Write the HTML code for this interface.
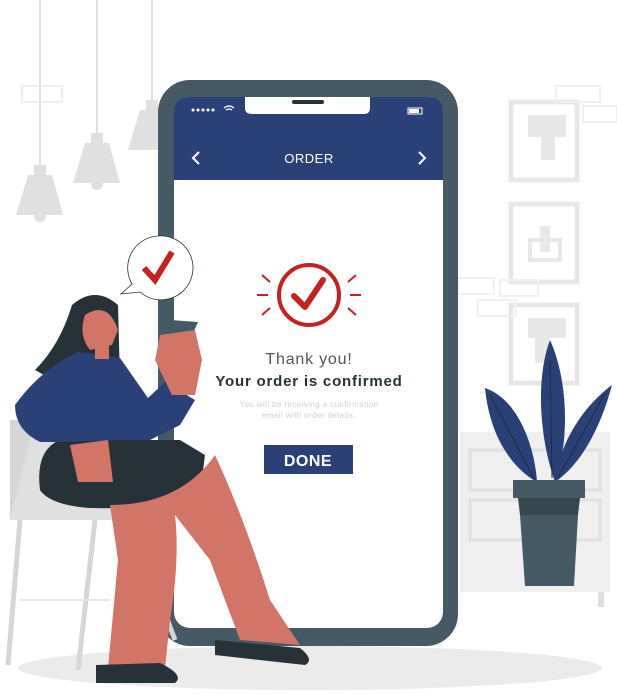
<!DOCTYPE html>
<html><head><meta charset="utf-8"><style>
html,body{margin:0;padding:0;background:#fff;}
svg{display:block}
text{font-family:"Liberation Sans",sans-serif}
</style></head><body>
<svg width="617" height="694" viewBox="0 0 617 694" xmlns="http://www.w3.org/2000/svg">
<ellipse cx="310" cy="668" rx="292" ry="22" fill="#ebebeb"/>
<g stroke="#e0e0e0" stroke-width="2">
<line x1="40" y1="0" x2="40" y2="170"/><line x1="97" y1="0" x2="97" y2="138"/><line x1="152" y1="0" x2="152" y2="105"/>
</g>
<g fill="#e0e0e0">
<rect x="34" y="165" width="12" height="10"/><path d="M28 175 L52 175 L63 215 L16 215 Z"/><circle cx="40" cy="216" r="6"/>
<rect x="91" y="133" width="12" height="10"/><path d="M85 143 L109 143 L120 183 L73 183 Z"/><circle cx="97" cy="184" r="6"/>
<rect x="146" y="100" width="12" height="10"/><path d="M140 110 L158 110 L158 150 L128 150 Z"/>
</g>
<rect x="22" y="86" width="40" height="16" fill="none" stroke="#eee" stroke-width="2"/>
<g fill="none" stroke="#e8e8e8" stroke-width="5">
<rect x="511" y="102" width="66" height="78"/><rect x="511" y="204" width="66" height="78"/><rect x="511" y="305" width="66" height="78"/>
</g>
<g fill="#e8e8e8">
<rect x="528" y="115" width="38" height="22"/><rect x="541" y="120" width="14" height="40"/>
<rect x="530" y="240" width="30" height="20" fill="none" stroke="#e8e8e8" stroke-width="4"/><rect x="540" y="226" width="10" height="26"/>
<rect x="528" y="318" width="38" height="20"/><rect x="535" y="325" width="14" height="38"/>
</g>
<g fill="none" stroke="#f0f0f0" stroke-width="2">
<rect x="556" y="86" width="44" height="16"/><rect x="583" y="106" width="34" height="16"/>
<rect x="458" y="278" width="36" height="16"/><rect x="500" y="280" width="38" height="16"/><rect x="478" y="300" width="38" height="16"/>
</g>
<rect x="460" y="432" width="150" height="160" fill="#efefef"/>
<g fill="none" stroke="#e0e0e0" stroke-width="3"><rect x="470" y="450" width="130" height="40"/><rect x="470" y="500" width="130" height="40"/></g>
<rect x="598" y="592" width="6" height="15" fill="#e0e0e0"/>
<g fill="#2a4178">
<path d="M485 388 C520 400 535 450 537 482 C515 470 490 440 485 388 Z"/>
<path d="M550 340 C568 380 570 440 555 482 C540 440 535 380 550 340 Z"/>
<path d="M612 385 C600 430 580 465 555 482 C560 440 585 405 612 385 Z"/>
</g>
<g stroke="#1f2d44" stroke-width="1" fill="none"><path d="M490 395 L535 480"/><path d="M550 360 L552 478"/><path d="M605 393 L558 478"/></g>
<rect x="513" y="480" width="72" height="18" fill="#455a64"/>
<path d="M518 498 L580 498 L578 515 L520 515 Z" fill="#37474f"/>
<path d="M520 515 L578 515 L574 586 L525 586 Z" fill="#455a64"/>
<rect x="158" y="80" width="300" height="566" rx="32" fill="#455a64"/>
<rect x="174" y="97" width="269" height="531" rx="16" fill="#fff"/>
<path d="M190 97 H245 V108 Q245 114 252 114 H364 Q370 114 370 108 V97 H427 Q443 97 443 113 V180 H174 V113 Q174 97 190 97 Z" fill="#2a4178"/>
<rect x="292" y="100" width="32" height="4" rx="2" fill="#263238"/>
<g fill="#fff"><circle cx="193" cy="110" r="1.5"/><circle cx="198" cy="110" r="1.5"/><circle cx="203" cy="110" r="1.5"/><circle cx="208" cy="110" r="1.5"/><circle cx="213" cy="110" r="1.5"/></g>
<path d="M224 108 Q229 104 234 108 M226 110 Q229 108 232 110" stroke="#fff" stroke-width="1.2" fill="none"/>
<rect x="408" y="108" width="14" height="6" fill="none" stroke="#fff" stroke-width="1"/><rect x="409" y="109" width="10" height="4" fill="#fff"/>
<path d="M199 152 L193 158 L199 164 M419 152 L425 158 L419 164" stroke="#fff" stroke-width="2" fill="none"/>
<text x="309" y="163" font-size="13" fill="#fff" text-anchor="middle" letter-spacing="0.5">ORDER</text>
<circle cx="309" cy="295" r="30" fill="none" stroke="#c62121" stroke-width="4"/>
<path d="M294 296 L305 307 L323 280" stroke="#c62121" stroke-width="6" fill="none" stroke-linecap="round" stroke-linejoin="round"/>
<g stroke="#c62121" stroke-width="2"><path d="M262 275 L270 282 M257 295 L268 295 M262 315 L270 308 M356 275 L348 282 M361 295 L350 295 M356 315 L348 308"/></g>
<text x="309" y="364" font-size="16" fill="#555" text-anchor="middle" letter-spacing="0.8">Thank you!</text>
<text x="309" y="386" font-size="15" font-weight="bold" fill="#263238" text-anchor="middle" letter-spacing="0.8">Your order is confirmed</text>
<text x="309" y="407" font-size="8" fill="#d0d0d0" text-anchor="middle" letter-spacing="0.4">You will be receiving a confirmation</text>
<text x="309" y="418" font-size="8" fill="#d0d0d0" text-anchor="middle" letter-spacing="0.4">email with order details.</text>
<rect x="264" y="445" width="89" height="29" fill="#2a4178"/>
<text x="308" y="466" font-size="16" fill="#fff" text-anchor="middle" font-weight="bold" letter-spacing="0.5">DONE</text>
<path d="M158 236 A32 32 0 1 1 140 292 L121 294 L132 284 A32 32 0 0 1 158 236 Z" fill="#fff" stroke="#263238" stroke-width="0.8"/>
<path d="M144 268 L155 280 L172 252" stroke="#c62121" stroke-width="6" fill="none"/>
<rect x="10" y="420" width="25" height="100" fill="#d6d6d6"/>
<path d="M35 420 L130 470 L130 520 L10 520 Z" fill="#e0e0e0"/>
<path d="M20 520 L8 665 M95 520 L78 670 M130 520 L175 640" stroke="#d6d6d6" stroke-width="5"/>
<line x1="20" y1="600" x2="110" y2="600" stroke="#e6e6e6" stroke-width="2"/>
<!-- hair -->
<path d="M72 305 Q95 285 118 305 L120 380 L80 395 L35 370 Q60 345 72 305 Z" fill="#263238"/>
<!-- skirt -->
<path d="M40 490 Q35 450 60 440 L180 440 L205 455 L200 495 Q150 510 90 508 Q50 505 40 490 Z" fill="#263238"/>
<!-- legs -->
<path d="M110 505 Q180 505 215 455 Q245 520 270 600 L300 645 L240 640 L210 560 L175 515 Q180 560 170 620 L165 668 L108 668 L118 560 Z" fill="#d27566"/>
<path d="M215 640 L300 648 Q315 660 305 665 L215 655 Z" fill="#263238"/>
<path d="M96 665 L160 663 Q185 675 175 683 L96 683 Z" fill="#263238"/>
<!-- sweater -->
<path d="M15 405 Q40 370 78 352 L120 358 L148 398 L165 382 L195 400 L180 425 L150 440 L120 440 L60 442 L40 442 Q15 430 15 405 Z" fill="#2a4178"/>
<path d="M70 445 L108 440 L113 482 L78 482 Z" fill="#d27566"/>
<path d="M85 315 Q108 300 118 330 L112 345 L90 350 Q78 335 85 315 Z" fill="#d27566"/>
<rect x="95" y="345" width="14" height="14" fill="#d27566"/>
<path d="M170 320 L198 322 L190 340 L168 338 Z" fill="#455a64"/>
<path d="M160 335 L195 330 L202 360 L195 395 L172 395 L155 360 Z" fill="#d27566"/>
</svg>
</body></html>
